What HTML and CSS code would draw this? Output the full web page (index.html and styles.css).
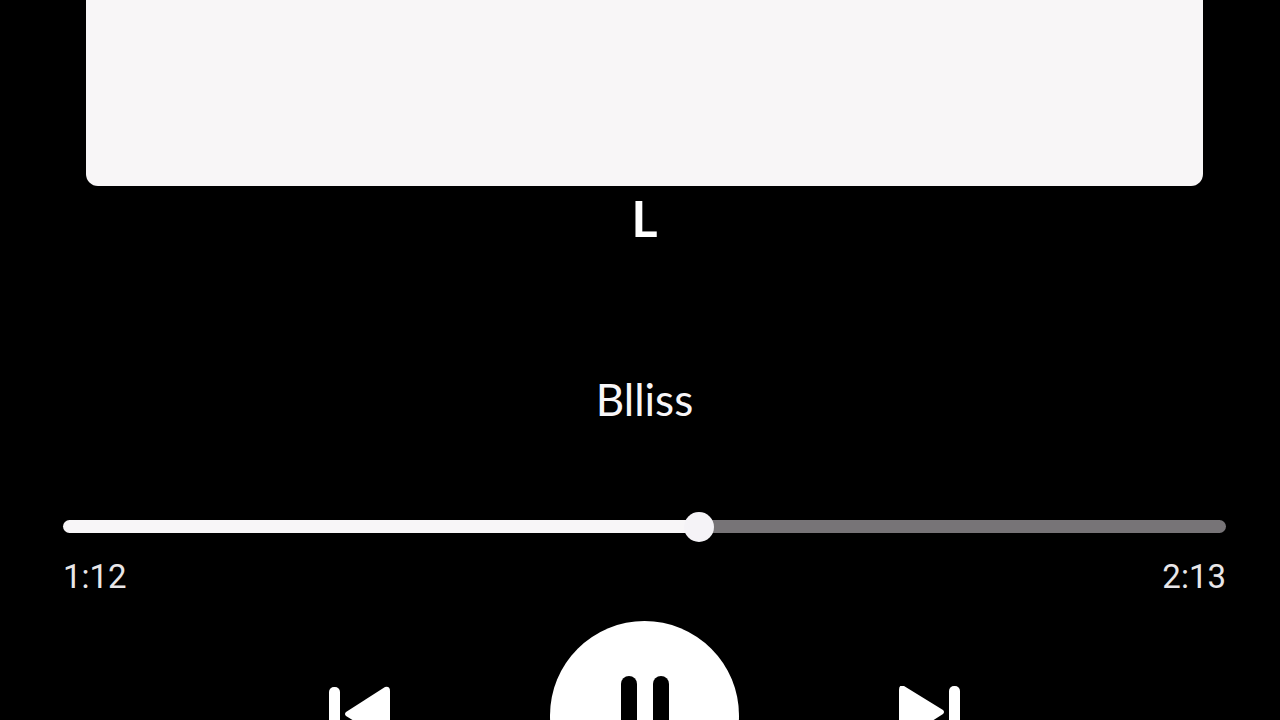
FILE: index.html
```
<!DOCTYPE html>
<html lang="en">
<head>
    <meta charset="UTF-8">
    <meta name="viewport" content="width=device-width, initial-scale=1.0">
    <title>Music Player</title>
    <link rel="stylesheet" href="styles.css">
</head>
<body>

    <main class="player">
        <div class="cover"></div>

        <h1 class="title">L</h1>
        <p class="artist">Blliss</p>

        <input class="progress" type="range" min="0" max="1000" value="548" aria-label="Song progress">

        <div class="times">
            <span>1:12</span>
            <span>2:13</span>
        </div>

        <div class="controls">
            <button class="skip" aria-label="Previous">
                <svg viewBox="0 0 62 60">
                    <rect x="0" y="1" width="11" height="56" rx="5"/>
                    <path d="M17 26 Q15 28 17 30 L56 54 Q61 56 61 51 V5 Q61 0 56 1 Z"/>
                </svg>
            </button>
            <button class="pause" aria-label="Pause">
                <svg viewBox="0 0 48 80">
                    <rect x="0" y="0" width="16" height="80" rx="8"/>
                    <rect x="32" y="0" width="16" height="80" rx="8"/>
                </svg>
            </button>
            <button class="skip" aria-label="Next">
                <svg viewBox="0 0 62 60">
                    <path d="M45 24 Q47 26 45 28 L6 53 Q1 55 1 50 V4 Q1 -2 6 0 Z"/>
                    <rect x="51" y="0" width="11" height="56" rx="5"/>
                </svg>
            </button>
        </div>
    </main>

</body>
</html>
```
FILE: styles.css
```
/* General Styles */
body {
    font-family: Lato, sans-serif;
    margin: 0;
    height: 100vh;
    overflow: hidden;
    background-color: #000;
    color: white;
    text-align: center;
}

.player {
    display: flex;
    flex-direction: column;
    padding: 0 54px 0 63px;
}

/* Album Cover */
.cover {
    height: 186px;
    margin: 0 23px;
    background: #f8f6f7;
    border-radius: 0 0 12px 12px;
}

/* Song Info */
.title {
    margin: 2px 0 0;
    font-size: 50px;
    line-height: 60px;
    font-weight: bold;
}

.artist {
    margin: 125px 0 86px;
    font-size: 44px;
    line-height: 52px;
    color: #f8f6f8;
}

/* Progress Bar */
.progress {
    -webkit-appearance: none;
    appearance: none;
    width: 100%;
    height: 30px;
    margin: 0;
    background: transparent;
    cursor: pointer;
}

.progress::-webkit-slider-runnable-track {
    height: 13px;
    border-radius: 7px;
    background: linear-gradient(90deg, #f8f6f8 55%, #777477 55%);
}

.progress::-webkit-slider-thumb {
    -webkit-appearance: none;
    width: 30px;
    height: 30px;
    margin-top: -8px;
    border-radius: 50%;
    background: #f5f3f7;
}

.times {
    display: flex;
    justify-content: space-between;
    margin-top: 16px;
    font-family: Roboto, sans-serif;
    font-size: 33px;
    line-height: 40px;
    color: #e8e6e8;
}

/* Controls */
.controls {
    display: flex;
    justify-content: center;
    align-items: center;
    gap: 159px;
    margin-top: 24px;
}

.controls button {
    border: none;
    padding: 0;
    cursor: pointer;
}

.skip {
    width: 62px;
    height: 60px;
    background: none;
    fill: white;
}

.skip svg {
    display: block;
    width: 62px;
    height: 60px;
}

.pause {
    display: flex;
    justify-content: center;
    align-items: center;
    width: 189px;
    height: 189px;
    border-radius: 50%;
    background: white;
}

.pause svg {
    width: 48px;
    height: 80px;
}
```
